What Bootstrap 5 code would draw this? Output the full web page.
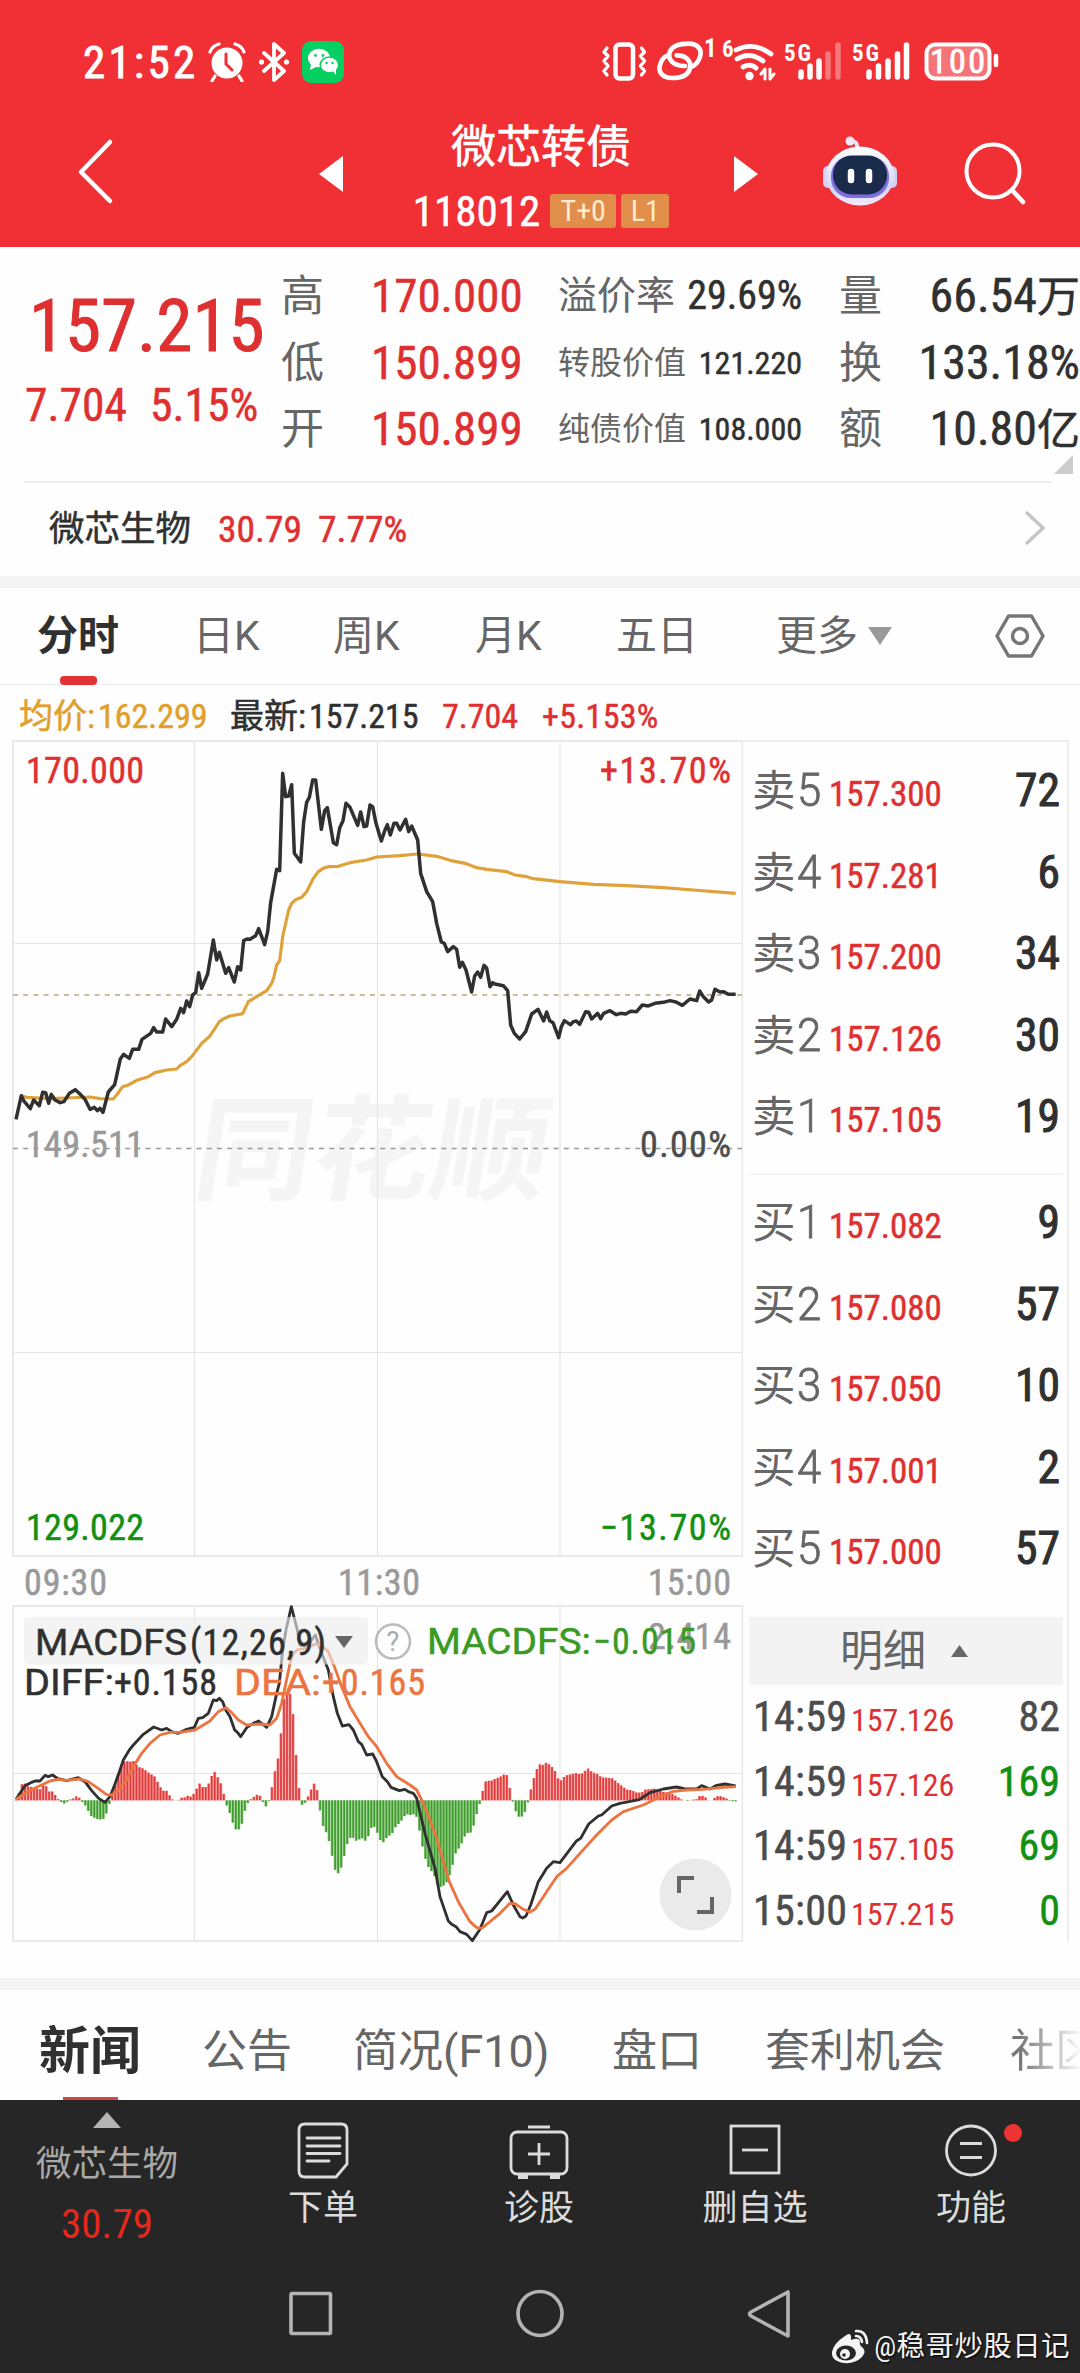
<!DOCTYPE html>
<html lang="zh-CN">
<head>
<meta charset="utf-8">
<meta name="viewport" content="width=device-width, initial-scale=1">
<title>微芯转债 118012</title>
<link rel="stylesheet" href="https://cdn.jsdelivr.net/npm/bootstrap@5.3.0/dist/css/bootstrap.min.css">
<style>
:root{--up:#df3031;--down:#129012;--ink:#303030;--dim:#666}
body{background:#fff;color:var(--ink);font-family:"Roboto Condensed","Noto Sans CJK SC",sans-serif;line-height:1}
.screen{width:1080px;height:2373px;overflow:hidden;background:#fefefe}
.wide{font-family:Roboto,"Noto Sans CJK SC",sans-serif}
svg,nav>span{flex:none}
svg{display:block}
.up{color:var(--up)}.down{color:var(--down)}.dim{color:var(--dim)}
.ink5{-webkit-text-stroke:.5px currentColor}
.ink9{-webkit-text-stroke:1px currentColor}
.top-red{background:#f13035;color:#fff;height:247px}
.statusline{height:100px;padding:24px 80px 0 83px}
.clock{font-size:45px;letter-spacing:3.2px;width:125px;-webkit-text-stroke:.9px #fff}
.titlebar{height:147px;padding:0 54px 0 77px}
.bond-name{font-size:45px;line-height:50px;-webkit-text-stroke:.6px #fff}
.bond-code{font-size:43px;line-height:44px}
.tagbox{background:#e18e4b;color:#ffeccf;border-radius:3px;height:34px;line-height:34px;font-size:30px}
.quote{height:234px;padding-top:16px}
.quote .line{height:66.6px;line-height:66.6px}
.price-big{font-size:73px;line-height:74px}
.price-sub{font-size:45.5px;line-height:50px}
.q-l{font-size:43px}.q-n{font-size:47px}
.related{height:95px;border-top:2px solid #efefef;margin:0 28px 0 24px;padding-left:25px}
.strip{height:12px;background:#f4f4f4}
.period{height:97px;font-size:41px;border-bottom:1px solid #e9e9e9;color:var(--dim);padding-left:37px}
.period .on{color:var(--ink);font-weight:700;position:relative}
.period .on::after{content:"";position:absolute;left:23px;bottom:0;width:37px;height:9px;border-radius:4px;background:#e23234}
.period span{line-height:97px}
.avgline{height:55px;padding:7px 0 0 19px;font-size:34px;line-height:48px}
.market{height:1238px}
.book{width:326px;height:1202px;border-top:2px solid #eee;border-right:2px solid #eee;padding-top:8px}
.book .line{height:81.6px;line-height:81.6px;padding:0 7px 0 9px;overflow:hidden}
.book .side{width:77px;font-size:43.5px;color:var(--dim)}
.book .side i{font-style:normal;font-size:46px;font-family:Roboto;font-weight:300;display:inline-block;transform:scaleX(.95);transform-origin:0 0;margin-left:1px;-webkit-text-stroke:.8px currentColor}
.book .px{font-size:35px}
.book .vol{font-size:45.5px}
.book .rule{height:2px;background:#f3f3f3;margin:15px 4px 7px 7px}
.detail-h{height:68px;background:#f3f3f3;margin:27px 4px 0 6px;font-size:43px;line-height:68px}
.book .tick{height:64.6px;line-height:64.6px;padding:0 7px 0 10px;overflow:hidden}
.tick .tm{font-size:42px;width:98px;color:#4c4c4c;letter-spacing:.3px}
.tick .px{font-size:32px}
.tick .vol{font-size:42px;color:#4c4c4c}
.tick .vol.down{color:var(--down)}
.newsbar{height:110px;font-size:45px;color:var(--dim);padding-left:39px}
.newsbar span{line-height:124px;white-space:nowrap}
.newsbar .on{color:var(--ink);font-size:51px;font-weight:700;position:relative;height:110px}
.newsbar .on::after{content:"";position:absolute;left:24px;bottom:0;width:55px;height:3px;background:#cf4a44}
.newsbar .fade-r{background:linear-gradient(90deg,#777 10%,rgba(254,254,254,.1) 80%);-webkit-background-clip:text;color:transparent}
.dock{background:#262626;height:273px;color:#dcdcdc;position:relative}
.dock .item{width:142px;font-size:35px;line-height:40px}
.dock .note{font-size:28.5px;right:10px;bottom:8px;color:#f4f4f4;text-shadow:1px 1px 2px #000}
</style>
<script src="https://cdn.jsdelivr.net/npm/bootstrap@5.3.0/dist/js/bootstrap.bundle.min.js"></script>
</head>
<body>
<main class="screen d-flex flex-column">

<header class="top-red">
  <div class="statusline d-flex align-items-center">
    <span class="clock">21:52</span>
    <svg width="38" height="40" viewBox="0 0 38 40"><circle cx="19" cy="21" r="15.500" fill="#fff"/><path d="M2 10Q4 4 11 2M36 10Q34 4 27 2M7 34l-3 5M31 34l3 5" stroke="#fff" stroke-width="3.200" fill="none" stroke-linecap="round"/><path d="M18 12v10l6 6" stroke="#f13035" stroke-width="3" fill="none" stroke-linecap="round"/></svg>
    <svg class="ms-2 me-2" width="40" height="40" viewBox="0 0 40 40"><path d="M10 11l20 18-10 9V2l10 9-20 18" fill="none" stroke="#fff" stroke-width="3.800" stroke-linejoin="round" stroke-linecap="round"/><circle cx="7.500" cy="20" r="2.600" fill="#fff"/><circle cx="32.500" cy="20" r="2.600" fill="#fff"/></svg>
    <svg width="42" height="42" viewBox="0 0 42 42"><rect width="42" height="42" rx="9" fill="#06cf62"/><ellipse cx="17" cy="17" rx="11" ry="9.300" fill="#fff"/><path d="M9 23l-1 6 6-3z" fill="#fff"/><ellipse cx="27.500" cy="24" rx="9.300" ry="8" fill="#fff" stroke="#06cf62" stroke-width="1.500"/><path d="M31 30l3 4v-6z" fill="#fff"/><g fill="#06cf62"><circle cx="13.500" cy="14.500" r="1.400"/><circle cx="21" cy="14.500" r="1.400"/><circle cx="24.500" cy="22" r="1.200"/><circle cx="30.500" cy="22" r="1.200"/></g></svg>
    <svg class="ms-auto" width="400" height="60" viewBox="600 32 400 60" fill="none" stroke="#fff" stroke-linecap="round" stroke-linejoin="round">
      <rect x="615.500" y="44.500" width="17.500" height="34" rx="4" stroke-width="4.500"/>
      <path d="M607 48l-3 4 4 4-4 5 4 5-4 5 3 4M641.500 48l3 4-4 4 4 5-4 5 4 5-3 4" stroke-width="3.400"/>
      <g transform="translate(595 34) scale(.33333)" stroke-width="14"><path d="M270 96C235 96 215 75 225 52C235 32 262 29 280 29C310 29 322 48 315 68C311 82 303 92 292 97"/><path d="M245 64C272 64 292 80 284 106C276 128 250 132 232 132C200 132 188 112 196 90C200 78 206 70 214 66"/></g>
      <g fill="#fff" stroke="none" font-family="Roboto Condensed" font-weight="700"><text x="704" y="57" font-size="25">1</text><text x="722" y="57" font-size="23">6</text><text x="784" y="61" font-size="23" textLength="27">5G</text><text x="852" y="61" font-size="23" textLength="27">5G</text></g>
      <path d="M736 50q17-9 35 4M737 59q13-8 26 2M743 67q8-4 13 1" stroke-width="4.800"/><circle cx="749.500" cy="76" r="4.200" fill="#fff" stroke="none"/>
      <path d="M765 79V69l-4 5M770 69v10l4-5" stroke-width="3"/>
      <g stroke-width="5.500"><path d="M801 72v5M810 66v11M819 61v16"/><path d="M828 54v23M838 45v32" opacity=".35"/><path d="M869 72v5M878.500 66v11M888 61v16M897.500 54v23M906.500 45v32"/></g>
      <rect x="926.500" y="44.500" width="63" height="34" rx="9" fill="#fff" fill-opacity=".33" stroke-width="4"/><path d="M996 56v9" stroke-width="4.500"/>
      <text x="930" y="73" font-size="34" fill="#fff" stroke="#fff" stroke-width=".8" font-family="Roboto Condensed" textLength="55">100</text>
    </svg>
  </div>
  <div class="titlebar d-flex align-items-center">
    <svg class="mb-1" width="38" height="70" viewBox="0 0 38 70"><path d="M33 5L4 35l29 29" stroke="#fff" stroke-width="4.500" fill="none" stroke-linecap="round" stroke-linejoin="round"/></svg>
    <svg class="ms-auto" width="24" height="36"><path d="M24 0v36L0 18z" fill="#fff"/></svg>
    <div class="d-flex flex-column align-items-center" style="width:391px;margin-top:8px;padding-left:5px">
      <div class="bond-name">微芯转债</div>
      <div class="d-flex align-items-center" style="margin-top:16px"><span class="bond-code ink5">118012</span><span class="tagbox text-center" style="width:66px;margin-left:10px">T+0</span><span class="tagbox text-center" style="width:48px;margin-left:5px">L1</span></div>
    </div>
    <svg width="24" height="36"><path d="M0 0v36l24-18z" fill="#fff"/></svg>
    <svg style="margin-left:65px;margin-top:-6px" width="74" height="70" viewBox="0 0 74 70"><defs><linearGradient id="hd" x1="0" y1="0" x2="0" y2="1"><stop offset="0" stop-color="#fff"/><stop offset=".7" stop-color="#d4d6f8"/><stop offset="1" stop-color="#f3eafb"/></linearGradient></defs><path d="M34 13V9q-1-4-6-4" stroke="#eadff5" stroke-width="4" fill="none"/><circle cx="27" cy="5" r="4.500" fill="#f0e9fa"/><rect x="0" y="30" width="10" height="22" rx="5" fill="#d6d0f5"/><rect x="64" y="30" width="10" height="22" rx="5" fill="#d6d0f5"/><ellipse cx="37" cy="40" rx="34" ry="29.500" fill="url(#hd)"/><rect x="8" y="20" width="58" height="42" rx="20" fill="#7f6de0"/><rect x="10" y="19.500" width="54" height="39" rx="19" fill="#1a2a4a"/><path d="M28 36v8M46 36v8" stroke="#fff" stroke-width="6.500" stroke-linecap="round"/></svg>
    <svg style="margin-left:67px" width="62" height="64" viewBox="0 0 62 64"><circle cx="29" cy="29" r="26.500" fill="none" stroke="#fff" stroke-width="4"/><path d="M48 48l11 12" stroke="#fff" stroke-width="4.500" stroke-linecap="round"/></svg>
  </div>
</header>

<section class="quote d-flex position-relative">
  <div class="up d-flex flex-column" style="width:281px">
    <div class="price-big ink9" style="padding:26px 0 0 29px">157.215</div>
    <div class="price-sub ink5 d-flex" style="padding:18px 0 0 25px"><span style="width:125px">7.704</span><span>5.15%</span></div>
  </div>
  <div class="q-l dim" style="width:90px"><div class="line">高</div><div class="line">低</div><div class="line">开</div></div>
  <div class="q-n up ink5" style="width:187px"><div class="line">170.000</div><div class="line">150.899</div><div class="line">150.899</div></div>
  <div style="width:244px">
    <div class="line d-flex justify-content-between"><span class="dim" style="font-size:39px">溢价率</span><span class="ink5" style="font-size:40px">29.69%</span></div>
    <div class="line d-flex justify-content-between"><span class="dim" style="font-size:32px">转股价值</span><span class="ink5" style="font-size:32px">121.220</span></div>
    <div class="line d-flex justify-content-between"><span class="dim" style="font-size:32px">纯债价值</span><span class="ink5" style="font-size:32px">108.000</span></div>
  </div>
  <div class="q-l dim" style="padding-left:37px;width:81px"><div class="line">量</div><div class="line">换</div><div class="line">额</div></div>
  <div class="q-n ink5 text-end ms-auto" style="font-size:48px"><div class="line">66.54<span class="q-l">万</span></div><div class="line">133.18%</div><div class="line">10.80<span class="q-l">亿</span></div></div>
  <svg class="position-absolute" style="right:7px;bottom:7px" width="19" height="19"><path d="M19 0v19H0z" fill="#ccc"/></svg>
</section>

<section class="related d-flex align-items-center">
  <span style="font-size:35.500px;width:169px" class="ink5">微芯生物</span>
  <span class="up ink5" style="font-size:37.500px;width:100px">30.79</span>
  <span class="up ink5" style="font-size:37.500px">7.77%</span>
  <svg class="ms-auto mb-1" style="margin-right:5px" width="24" height="38"><path d="M3 3l17 16L3 35" fill="none" stroke="#c6c6c6" stroke-width="3.500"/></svg>
</section>
<div class="strip"></div>

<nav class="period wide d-flex align-items-center">
  <span class="on" style="width:156px">分时</span><span style="width:140px">日K</span><span style="width:142px">周K</span><span style="width:141px">月K</span><span style="width:160px">五日</span><span style="width:92px">更多</span>
  <svg width="24" height="18"><path d="M0 0h24L12 18z" fill="#999"/></svg>
  <svg style="margin-left:103px" width="50" height="46" viewBox="0 0 50 46" fill="none" stroke="#777" stroke-width="3.500" stroke-linejoin="round"><path d="M13.500 3h23L48 23 36.500 43h-23L2 23z"/><circle cx="25" cy="23" r="7.500"/></svg>
</nav>

<div class="avgline d-flex ink5">
  <span style="color:#dfa02c;width:211px">均价:<span style="margin-left:3px">162.299</span></span>
  <span style="width:212px">最新:<span style="margin-left:3px">157.215</span></span>
  <span class="up" style="width:100px">7.704</span><span class="up" style="letter-spacing:.3px">+5.153%</span>
</div>

<section class="market d-flex">
  <svg id="chart" width="743" height="1215" viewBox="0 740 743 1215" font-family="Roboto Condensed" font-size="36">
    <g font-family="Noto Sans CJK SC" font-weight="700" fill="#f5f5f5" font-size="114"><text transform="translate(190 1191) skewX(-9)" textLength="354" lengthAdjust="spacingAndGlyphs">同花顺</text></g>
    <path d="M13 943.500H742M13 1352.500H742M194.500 740V1556M377.500 740V1556M560 740V1556M13 1773.500H742M194.500 1606V1941M377.500 1606V1941M560 1606V1941" stroke="#e4e4e4" stroke-width="1.200"/>
    <rect x="13" y="741" width="729.500" height="815" fill="none" stroke="#e9e9e9" stroke-width="2"/>
    <rect x="13" y="1606" width="729.500" height="335" fill="none" stroke="#e4e4e4" stroke-width="1.500"/>
    <path d="M13 995H742" stroke="#b9a978" stroke-width="1.600" stroke-dasharray="5 5.200"/>
    <path d="M13 1148.500H742" stroke="#999" stroke-width="1.600" stroke-dasharray="5 5.200"/>
    <g transform="translate(0 740) scale(.33333)" fill="none" stroke-linejoin="round" stroke-width="10.500">
      <polyline stroke="#dfa23a" stroke-width="9.500" points="64,1067 80,1072 150,1076 200,1074 270,1071 300,1076 340,1077 352,1062 368,1040 385,1035 410,1021 445,1010 465,998 500,990 530,987 540,977 560,965 575,950 605,910 630,888 658,845 672,836 690,828 728,821 745,785 770,770 800,752 815,730 822,710 830,675 839,662 848,590 866,510 875,490 887,479 905,472 920,455 940,415 955,395 970,385 985,380 1015,379 1050,368 1100,360 1130,351 1200,347 1253,342 1310,349 1350,361 1395,370 1430,383 1460,388 1520,395 1545,405 1575,409 1600,416 1680,425 1780,433 1880,437 1990,443 2080,450 2207,460"/>
      <polyline stroke="#303030" points="48,1138 64,1067 73,1085 91,1106 101,1080 118,1097 128,1057 137,1058 146,1090 154,1063 165,1080 180,1088 192,1085 208,1060 226,1049 240,1062 255,1078 270,1108 283,1102 292,1112 300,1105 309,1117 325,1056 344,1034 361,957 371,943 388,955 398,928 416,928 426,898 452,880 461,863 470,876 488,876 497,837 515,860 530,838 542,805 551,818 560,783 569,800 578,765 587,758 596,698 605,745 623,702 640,600 650,660 658,637 677,700 686,683 703,726 713,680 722,690 731,602 741,597 750,598 767,587 776,566 794,614 803,575 812,488 830,388 839,392 848,100 857,170 866,168 875,134 883,340 902,366 911,245 920,187 928,172 938,120 947,120 964,268 974,212 982,203 1000,308 1010,314 1019,264 1029,242 1038,190 1050,202 1073,256 1082,216 1092,260 1100,258 1110,195 1118,200 1128,250 1144,303 1155,270 1162,254 1171,285 1182,250 1190,250 1200,270 1217,238 1226,275 1235,258 1253,300 1262,400 1280,455 1298,485 1310,550 1324,606 1333,610 1343,635 1360,620 1370,628 1379,682 1387,667 1398,690 1415,756 1424,708 1433,696 1442,712 1452,676 1460,684 1470,740 1478,728 1485,732 1510,737 1523,752 1532,855 1543,880 1559,897 1577,875 1595,822 1614,808 1631,843 1640,816 1649,842 1659,848 1676,893 1684,860 1693,842 1711,854 1720,845 1729,843 1739,853 1757,815 1766,817 1775,837 1793,820 1802,836 1811,820 1830,812 1849,824 1862,820 1877,822 1892,814 1910,815 1927,795 1945,798 1965,790 1990,787 2010,782 2028,786 2047,796 2070,777 2090,782 2099,753 2110,770 2126,786 2135,780 2145,748 2160,756 2170,755 2185,763 2207,763"/>
    </g>
    <g stroke-width=".5">
      <text x="26" y="783" fill="#df3031" stroke="#df3031" textLength="118">170.000</text>
      <text x="600" y="783" fill="#df3031" stroke="#df3031" textLength="131">+13.70%</text>
      <text x="26" y="1157" fill="#999" stroke="#999" textLength="118">149.511</text>
      <text x="640" y="1157" fill="#4c4c4c" stroke="#4c4c4c" textLength="91">0.00%</text>
      <text x="26" y="1540" fill="#129012" stroke="#129012" textLength="118">129.022</text>
      <text x="600" y="1540" fill="#129012" stroke="#129012" textLength="131">−13.70%</text>
      <g fill="#999" stroke="#999"><text x="24" y="1595" textLength="83">09:30</text><text x="338" y="1595" textLength="82">11:30</text><text x="648" y="1595" textLength="83">15:00</text></g>
    </g>
    <g transform="translate(0 1590) scale(.33333)" fill="none" stroke-linejoin="round" stroke-width="8.500">
      <g id="bars" stroke="none"></g>
      <polyline stroke="#303030" points="48,628 75,587 95,577 105,573 120,573 135,556 145,560 158,555 173,566 200,572 235,563 255,575 275,602 296,625 315,637 330,620 345,582 360,540 370,510 388,480 400,465 430,433 461,411 485,420 500,415 515,425 535,430 560,418 583,412 595,385 608,383 625,370 640,330 650,332 658,325 668,335 677,360 690,380 704,420 713,428 722,440 740,413 760,400 776,393 800,412 815,380 830,310 838,280 848,180 858,120 874,50 892,120 900,165 920,170 946,135 965,190 985,240 1000,320 1012,370 1027,408 1047,404 1060,420 1075,455 1085,463 1100,495 1118,492 1130,515 1147,560 1162,575 1173,592 1198,602 1215,598 1225,605 1240,610 1250,625 1275,730 1305,835 1320,920 1345,993 1355,1003 1368,1010 1380,1025 1400,1033 1417,1052 1440,1018 1460,968 1475,963 1522,905 1540,945 1560,980 1568,984 1578,978 1592,945 1615,875 1640,835 1660,815 1680,818 1705,785 1730,752 1742,745 1766,702 1795,678 1805,675 1835,648 1860,640 1918,629 1950,608 1990,597 2030,591 2055,597 2090,597 2105,587 2130,597 2150,586 2175,582 2207,588"/>
      <polyline stroke="#ec7440" points="48,628 75,610 110,592 150,573 175,568 200,571 240,567 265,575 290,592 320,614 335,615 350,605 380,570 400,530 425,490 450,460 480,435 510,427 540,427 585,420 630,393 655,365 677,353 695,368 715,390 740,405 780,402 810,405 830,385 845,340 870,220 880,190 895,178 920,175 945,162 962,165 985,185 1005,235 1025,290 1050,350 1080,400 1105,440 1130,470 1160,520 1190,560 1230,585 1250,600 1270,640 1290,690 1310,745 1330,815 1348,875 1375,935 1410,995 1430,1013 1445,1015 1470,995 1500,970 1530,940 1545,941 1570,958 1590,966 1605,958 1640,905 1670,860 1700,835 1740,790 1790,735 1835,690 1870,665 1930,645 1980,620 2020,604 2060,600 2110,598 2170,592 2207,590"/>
    </g>
    <rect x="24" y="1617" width="344" height="47.500" rx="4" fill="#ebebeb" fill-opacity=".62"/>
    <g stroke-width=".5">
      <text x="35" y="1655" fill="#303030" stroke="#303030" font-family="Roboto" font-size="37" textLength="152" lengthAdjust="spacingAndGlyphs">MACDFS</text>
      <text x="190" y="1655" fill="#303030" stroke="#303030" textLength="136">(12,26,9)</text>
      <path d="M335 1636h18l-9 12z" fill="#666"/>
      <circle cx="393" cy="1641.500" r="17" fill="none" stroke="#bbb" stroke-width="2.500"/>
      <text x="393" y="1651" text-anchor="middle" font-size="27" font-family="Roboto" fill="#aaa">?</text>
      <text x="648" y="1649" fill="#999" stroke="#999" textLength="83">2.414</text>
      <text x="427" y="1654" fill="#3a9a25" stroke="#3a9a25" textLength="164" lengthAdjust="spacingAndGlyphs" font-family="Roboto" font-size="37">MACDFS:</text>
      <text x="593" y="1654" fill="#3a9a25" stroke="#3a9a25" textLength="103">−0.015</text>
      <text x="24" y="1695" fill="#303030" stroke="#303030" font-family="Roboto" textLength="90" lengthAdjust="spacingAndGlyphs">DIFF:</text>
      <text x="114" y="1695" fill="#303030" stroke="#303030" textLength="103">+0.158</text>
      <text x="234" y="1695" fill="#ec7440" stroke="#ec7440" font-family="Roboto" textLength="87" lengthAdjust="spacingAndGlyphs">DEA:</text>
      <text x="322" y="1695" fill="#ec7440" stroke="#ec7440" textLength="103">+0.165</text>
    </g>
    <circle cx="695.500" cy="1894.500" r="36" fill="#eaeaea"/><path d="M679 1893v-15h15M697 1912h15v-15" fill="none" stroke="#666" stroke-width="4"/>
  </svg>
  <div class="book" id="book"></div>
</section>

<div class="strip"></div>
<nav class="newsbar wide d-flex">
  <span class="on" style="width:163px">新闻</span><span style="width:151px">公告</span><span style="width:259px">简况(F10)</span><span style="width:153px">盘口</span><span style="width:245px">套利机会</span><span class="fade-r">社区</span>
</nav>

<footer class="dock">
  <div class="d-flex justify-content-between text-center" style="height:150px">
    <div class="item d-flex flex-column align-items-center" style="color:#a9a9a9;margin-left:36px"><svg style="margin-top:12px" width="28" height="16"><path d="M14 0l14 16H0z" fill="#b4b4b4"/></svg><div class="text-nowrap" style="margin-top:16px;font-size:35.500px">微芯生物</div><div style="color:#e9281c;font-size:41px;margin-top:20px">30.79</div></div>
    <div class="item d-flex flex-column align-items-center"><svg style="margin-top:22px" width="52" height="58" viewBox="0 0 52 58" fill="none" stroke="#dcdcdc" stroke-width="2.800" stroke-linecap="round"><path d="M8 2h36q6 0 6 6v34L39 55H8q-6 0-6-6V8q0-6 6-6z"/><path d="M10 16h33M10 24h33M10 31.500h33M10 39h22"/></svg><div style="margin-top:9px">下单</div></div>
    <div class="item d-flex flex-column align-items-center"><svg style="margin-top:22px" width="60" height="58" viewBox="0 0 60 58" fill="none" stroke="#dcdcdc" stroke-width="2.800"><rect x="2" y="10" width="56" height="42" rx="6"/><path d="M19 5h22M30 21v22M19 32h22"/><path d="M9 55h10M41 55h10" stroke-width="4"/></svg><div style="margin-top:9px">诊股</div></div>
    <div class="item d-flex flex-column align-items-center"><svg style="margin-top:22px" width="52" height="58" viewBox="0 0 52 58" fill="none" stroke="#dcdcdc" stroke-width="2.800"><rect x="2" y="4" width="48" height="47"/><path d="M13 28h26"/></svg><div style="margin-top:9px">删自选</div></div>
    <div class="item d-flex flex-column align-items-center position-relative" style="margin-right:38px"><svg style="margin-top:22px" width="54" height="58" viewBox="0 0 54 58" fill="none" stroke="#dcdcdc" stroke-width="2.800"><circle cx="27" cy="28.500" r="24.500"/><path d="M16 21.500h22M16 35.500h22" stroke-width="3.200"/></svg><span class="position-absolute rounded-circle" style="background:#ee3333;width:18px;height:18px;left:104px;top:24px"></span><div style="margin-top:9px">功能</div></div>
  </div>
  <div class="d-flex justify-content-center align-items-center" style="padding-top:36px">
    <svg width="504" height="54" viewBox="288 2286 504 54" fill="none" stroke="#b4b4b4" stroke-width="3.600" stroke-linejoin="round"><rect x="291" y="2293.500" width="39.500" height="40" rx="1"/><circle cx="540" cy="2313.500" r="22"/><path d="M788 2292v44l-37-20q-3-2 0-4z"/></svg>
  </div>
  <div class="note position-absolute d-flex align-items-center"><svg class="me-1" width="40" height="36" viewBox="0 0 40 36"><path d="M15 7q5-4 6 0v4q8-3 9 1-1 4 2 6 5 4 0 10-7 7-18 6Q1 32 2 23 4 14 15 7z" fill="#f4f4f4"/><ellipse cx="16" cy="24" rx="10" ry="7.500" fill="#262626"/><circle cx="15" cy="25" r="5" fill="#f4f4f4"/><circle cx="14" cy="26" r="1.800" fill="#262626"/><path d="M26 2q10-1 11 12M26 7q5 0 6 6" fill="none" stroke="#f4f4f4" stroke-width="2.600" stroke-linecap="round"/></svg><span style="letter-spacing:.4px">@稳哥炒股日记</span></div>
</footer>
</main>

<script>
// Order book and last trades
const sells=[['5','157.300',72],['4','157.281',6],['3','157.200',34],['2','157.126',30],['1','157.105',19]];
const buys=[['1','157.082',9],['2','157.080',57],['3','157.050',10],['4','157.001',2],['5','157.000',57]];
const ticks=[['14:59','157.126',82,''],['14:59','157.126',169,'down'],['14:59','157.105',69,'down'],['15:00','157.215',0,'down']];
const line=(s,r)=>`<div class="line d-flex align-items-baseline"><span class="side">${s}<i>${r[0]}</i></span><span class="px up ink5">${r[1]}</span><span class="vol ms-auto ink9">${r[2]}</span></div>`;
document.getElementById('book').innerHTML=sells.map(r=>line('卖',r)).join('')+'<div class="rule"></div>'+buys.map(r=>line('买',r)).join('')
 +'<div class="detail-h dim d-flex align-items-center"><span style="margin-left:91px">明细</span><svg style="margin-left:25px" width="17" height="12"><path d="M8.5 0L17 12H0z" fill="#666"/></svg></div>'
 +ticks.map(t=>`<div class="tick d-flex align-items-baseline"><span class="tm ink5">${t[0]}</span><span class="px up">${t[1]}</span><span class="vol ms-auto ink5 ${t[3]}">${t[2]}</span></div>`).join('');

// MACD histogram: [time position, height] knots, one bar per minute
const k=[48,2,57,22,64,48,75,50,84,42,110,36,118,30,128,45,137,45,146,26,155,28,164,18,173,5,182,-4,191,-10,200,-6,209,2,218,4,227,12,236,10,245,-3,254,-12,263,-28,272,-46,290,-56,308,-58,317,-46,326,-16,335,8,344,38,352,75,362,95,370,115,380,118,388,115,400,118,415,100,430,95,452,78,461,76,470,60,488,27,497,32,506,20,515,3,533,-2,542,9,551,5,560,16,569,8,587,25,596,55,605,40,620,40,632,60,640,93,650,73,658,63,668,35,677,-8,686,-28,695,-55,704,-87,722,-87,731,-43,740,-13,749,0,758,8,776,20,785,4,794,-18,803,-18,812,20,821,65,830,117,839,136,848,285,857,330,866,320,875,318,884,185,893,76,902,-10,911,-17,920,4,929,20,938,46,947,54,956,5,965,-68,983,-105,992,-140,1001,-193,1010,-223,1019,-214,1028,-190,1037,-145,1046,-118,1055,-108,1073,-125,1082,-110,1100,-124,1110,-90,1119,-73,1128,-87,1137,-110,1146,-130,1155,-120,1164,-105,1173,-106,1182,-88,1191,-72,1200,-70,1209,-50,1225,-40,1235,-46,1245,-38,1253,-58,1262,-112,1271,-155,1280,-188,1290,-210,1300,-215,1310,-250,1325,-262,1340,-245,1352,-217,1361,-180,1370,-148,1380,-142,1390,-115,1400,-98,1415,-96,1425,-62,1434,-25,1442,-3,1450,38,1460,64,1469,56,1480,62,1500,70,1513,78,1522,75,1532,24,1541,-14,1550,-40,1559,-52,1568,-47,1577,-30,1586,3,1595,43,1604,75,1613,100,1622,110,1631,105,1640,115,1650,105,1658,98,1667,85,1676,60,1685,60,1695,74,1730,82,1740,78,1750,82,1758,92,1766,96,1775,85,1795,78,1803,69,1838,66,1850,55,1880,32,1895,30,1910,23,1925,23,1935,32,1965,35,1985,26,2010,22,2030,12,2045,2,2060,-2,2080,2,2090,3,2100,14,2110,13,2120,6,2130,-4,2140,4,2150,12,2165,12,2180,5,2190,-2,2208,-3];
let out='',j=0;
for(let n=0;n<240;n++){const x=48+n*9.033;while(j<k.length-4&&k[j+2]<x)j+=2;
 const h=k[j+1]+(k[j+3]-k[j+1])*(x-k[j])/(k[j+2]-k[j]),y=h>0?631-h:631,c=h>0?['#f2908c','#df3a3c']:['#8fcb80','#3f9a30'],a=Math.abs(h).toFixed(1);
 out+=`<rect x="${(x-4.5).toFixed(1)}" y="${y.toFixed(1)}" width="9" height="${a}" fill="${c[0]}"/><rect x="${(x-2.4).toFixed(1)}" y="${y.toFixed(1)}" width="4.8" height="${a}" fill="${c[1]}"/>`}
document.getElementById('bars').innerHTML=out;
</script>
</body>
</html>
